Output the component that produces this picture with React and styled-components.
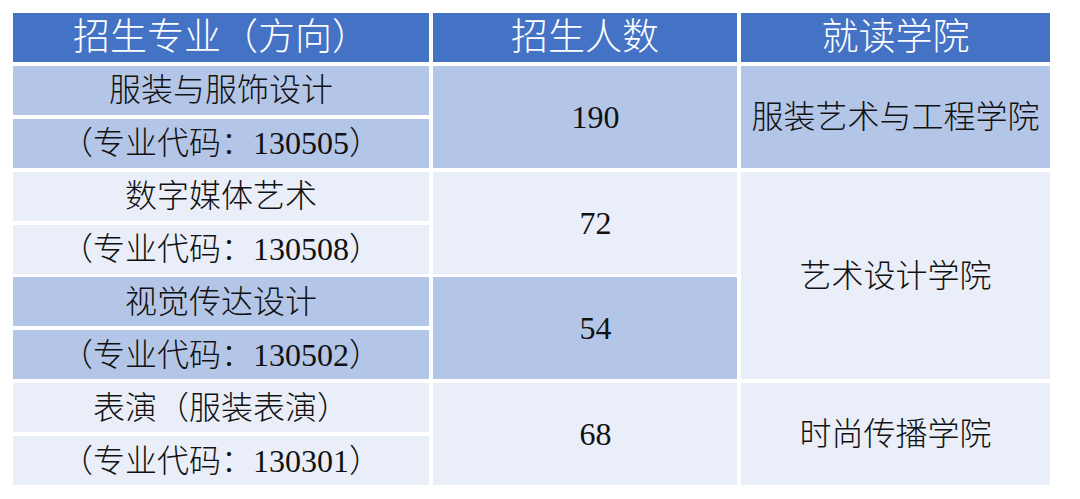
import styled, { createGlobalStyle } from 'styled-components';

const GlobalStyle = createGlobalStyle`
  html, body {
    margin: 0;
    padding: 0;
    background: #fff;
  }
  body {
    font-family: "Liberation Serif", "Noto Sans CJK SC", serif;
  }
`;

const Page = styled.div`
  padding: 13px 0 0 13px;
`;

const Grid = styled.div`
  display: grid;
  grid-template-columns: 416px 304px 309px;
  grid-auto-rows: 49px;
  column-gap: 4px;
  row-gap: 3.9px;
`;

const tones = {
  head: '#4472c4',
  dark: '#b4c6e7',
  light: '#e9eef8'
};

const Cell = styled.div`
  grid-column: ${(p) => p.$col};
  grid-row: span ${(p) => p.$rows || 1};
  background: ${(p) => tones[p.$tone]};
  color: ${(p) => (p.$tone === 'head' ? '#fff' : '#111')};
  font-size: ${(p) => (p.$tone === 'head' ? '37px' : '32px')};
  font-weight: 300;
  padding-left: ${(p) => (p.$shift ? '21px' : '0')};
  display: flex;
  align-items: center;
  justify-content: center;
  white-space: nowrap;
  line-height: 1;
`;

const majors = [
  { name: '服装与服饰设计', code: '130505', tone: 'dark' },
  { name: '数字媒体艺术', code: '130508', tone: 'light' },
  { name: '视觉传达设计', code: '130502', tone: 'dark' },
  { name: '表演（服装表演）', code: '130301', tone: 'light' }
];

const counts = ['190', '72', '54', '68'];

const colleges = {
  0: { name: '服装艺术与工程学院', rows: 2, tone: 'dark' },
  1: { name: '艺术设计学院', rows: 4, tone: 'light' },
  3: { name: '时尚传播学院', rows: 2, tone: 'light' }
};

export default function App() {
  return (
    <>
      <GlobalStyle />
      <Page>
        <Grid>
          <Cell $col={1} $tone="head">招生专业（方向）</Cell>
          <Cell $col={2} $tone="head">招生人数</Cell>
          <Cell $col={3} $tone="head">就读学院</Cell>
          {majors.map((m, i) => {
            const college = colleges[i];
            return [
              <Cell key={`n${i}`} $col={1} $tone={m.tone}>{m.name}</Cell>,
              <Cell key={`c${i}`} $col={2} $rows={2} $tone={m.tone} $shift>
                {counts[i]}
              </Cell>,
              college ? (
                <Cell key={`s${i}`} $col={3} $rows={college.rows} $tone={college.tone}>
                  {college.name}
                </Cell>
              ) : null,
              <Cell key={`k${i}`} $col={1} $tone={m.tone}>（专业代码：{m.code}）</Cell>
            ];
          })}
        </Grid>
      </Page>
    </>
  );
}
